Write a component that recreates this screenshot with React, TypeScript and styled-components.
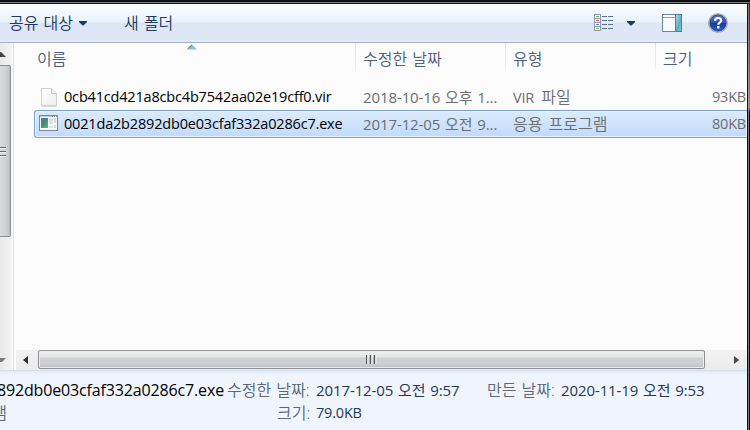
import React from "react";
import styled, { createGlobalStyle } from "styled-components";

const GlobalStyle = createGlobalStyle`
  * { box-sizing: border-box; }
  body { margin: 0; background: #0b0d10; overflow: hidden; }
`;

const Frame = styled.div`
  width: 750px;
  height: 430px;
  display: flex;
  flex-direction: column;
  overflow: hidden;
  font: 300 15px/20px "Open Sans", "Noto Sans CJK KR", sans-serif;
  color: #1e395b;
  white-space: pre;
`;

const TopEdge = styled.div`
  height: 4px;
  flex: none;
  background: linear-gradient(#0b1015 0 2px, #7b7d80 2px 3px, #15191d 3px 4px);
`;

const Middle = styled.div`
  height: 426px;
  display: flex;
`;

const Client = styled.div`
  width: 747px;
  display: flex;
  flex-direction: column;
`;

const RightEdge = styled.div`
  width: 3px;
  display: grid;
  grid-template-columns: 1px 1px 1px;
`;

const EdgeLine = styled.div<{ $fill: string }>`
  background: ${(p) => p.$fill};
`;

const Toolbar = styled.div`
  height: 39px;
  flex: none;
  display: flex;
  align-items: center;
  padding: 0 19px 0 9px;
  border-bottom: 1px solid #a0afc7;
  background: linear-gradient(#fcfeff 0, #e8f2fb 18px, #dde7f4 19px, #dce6f4 36px, #e8effa 37px);
`;

const Label = styled.span<{ $color?: string; $gap?: number }>`
  font-size: 16px;
  font-weight: 350;
  word-spacing: ${(p) => p.$gap ?? 1}px;
  color: ${(p) => p.$color ?? "inherit"};
`;

const Value = styled.span<{ $compact?: boolean }>`
  font-size: ${(p) => (p.$compact ? 14.5 : 15)}px;
  font-weight: 400;
  letter-spacing: ${(p) => (p.$compact ? -0.2 : -0.1)}px;
  word-spacing: 1px;
`;

const FileName = styled.span<{ $size?: number; $track?: number }>`
  font-size: ${(p) => p.$size ?? 14.5}px;
  font-weight: 400;
  letter-spacing: ${(p) => p.$track ?? -0.18}px;
  color: #000;
`;

const ToolbarButton = styled.div<{ $width: number }>`
  width: ${(p) => p.$width}px;
  flex: none;
  display: flex;
  align-items: center;
  gap: 6px;
`;

const ToolbarIcons = styled.div`
  margin-left: auto;
  display: flex;
  align-items: center;
`;

const Space = styled.span<{ $w: number }>`
  width: ${(p) => p.$w}px;
  flex: none;
`;

const Body = styled.div`
  height: 327px;
  flex: none;
  display: flex;
`;

const NavScroll = styled.div`
  width: 12px;
  flex: none;
  display: flex;
  flex-direction: column;
  background: linear-gradient(90deg, #e9e9e9, #f3f3f3);
`;

const NavArrow = styled.div<{ $top: number; $height: number }>`
  height: ${(p) => p.$height}px;
  padding-top: ${(p) => p.$top}px;
  flex: none;
  line-height: 0;
`;

const NavThumb = styled.div`
  height: 172px;
  flex: none;
  width: 11px;
  border: 1px solid #8d8d90;
  border-left: 0;
  border-radius: 0 2px 2px 0;
  background: linear-gradient(90deg, #dadadc, #cecfd1 70%, #b9babd);
  display: flex;
  align-items: center;
`;

const NavSplit = styled.div`
  width: 2px;
  flex: none;
  background: linear-gradient(90deg, #f8fafc 50%, #d5e2f0 50%);
`;

const List = styled.div`
  flex: 1;
  background: #fcfcfc;
  display: flex;
  flex-direction: column;
`;

const HeaderRow = styled.div`
  height: 40px;
  flex: none;
  display: grid;
  grid-template-columns: 342px 150px 150px 1fr;
  color: #4c607a;
`;

const HeaderCell = styled.div<{ $indent: number; $last?: boolean }>`
  position: relative;
  height: 29px;
  padding: 6px 0 0 ${(p) => p.$indent}px;
  border-right: ${(p) => (p.$last ? 0 : 1)}px solid;
  border-image: linear-gradient(#dbe6f2, #e5edf5 70%, #fcfcfc) 1;
`;

const SortMark = styled.svg`
  position: absolute;
  left: 173px;
  top: 1px;
`;

const FileRow = styled.div<{ $selected?: boolean }>`
  height: 28px;
  flex: none;
  margin-left: 20px;
  padding-right: 1px;
  display: grid;
  grid-template-columns: 29px 299px 150px 140px 1fr;
  align-items: center;
  line-height: 20px;
  color: #6d6d6d;
  border: 1px solid ${(p) => (p.$selected ? "#7da2ce" : "transparent")};
  border-right: 0;
  border-radius: 3px 0 0 3px;
  background: ${(p) => (p.$selected ? "linear-gradient(#dcebfc, #c1dbfc)" : "none")};
  box-shadow: ${(p) => (p.$selected ? "inset 0 0 0 1px #e8f2fd" : "none")};
  & + & { margin-top: -1px; }
`;

const FileIcon = styled.div<{ $left: number; $lift: number }>`
  padding: 0 0 ${(p) => p.$lift}px ${(p) => p.$left}px;
  line-height: 0;
`;

const SizeCell = styled.div`
  display: flex;
  justify-content: flex-end;
`;

const ScrollRow = styled.div`
  height: 20px;
  flex: none;
  margin: auto 0 0 2px;
  padding-bottom: 1px;
  display: flex;
  align-items: center;
  background: linear-gradient(#f2f2f2, #ebebeb);
`;

const HThumb = styled.div`
  width: 667px;
  height: 19px;
  border: 1px solid #8f8f91;
  border-radius: 2px;
  box-shadow: inset 0 0 0 1px #ececec;
  background: linear-gradient(#efefef 0, #e5e5e6 6px, #d1d2d4 7px, #cecfd1 13px, #bcbdc0);
  display: flex;
  align-items: center;
  justify-content: center;
`;

const ScrollArrow = styled.div<{ $width: number; $left: number }>`
  width: ${(p) => p.$width}px;
  padding-left: ${(p) => p.$left}px;
  line-height: 0;
`;

const Details = styled.div`
  flex: 1;
  background: linear-gradient(#c9d9eb 0, #dee8f5 1px, #e9f0fa 3px, #f0f4fc 6px);
  padding-top: 8px;
`;

const DetailRow = styled.div`
  height: 23px;
  display: flex;
  align-items: center;
`;

const DetailCell = styled.div<{ $width: number; $end?: boolean }>`
  width: ${(p) => p.$width}px;
  flex: none;
  display: flex;
  justify-content: ${(p) => (p.$end ? "flex-end" : "flex-start")};
`;

const DropArrow = () => (
  <svg width="8" height="5" viewBox="0 0 8 5">
    <path d="M0 0H8V1L4.5 4.5H3.5L0 1Z" fill="#1e395b" />
  </svg>
);

const ViewIcon = () => (
  <svg width="20" height="18" viewBox="0 0 20 18">
    {["#62a562", "#e0442f", "#4585d0", "#a8bd28"].map((c, i) => (
      <g key={c}>
        <rect x="0.5" y={0.5 + i * 4} width="6" height="4" fill="#fff" stroke="#8799b2" />
        <rect x="2" y={2 + i * 4} width="3" height="1" fill={c} />
        <path d={`M8 ${2.5 + i * 4}h5M14 ${2.5 + i * 4}h5`} stroke="#5d708c" />
      </g>
    ))}
  </svg>
);

const PaneIcon = () => (
  <svg width="20" height="18" viewBox="0 0 20 18">
    <defs>
      <linearGradient id="pane" x1="0" y1="0" x2="1" y2="1">
        <stop offset="0" stopColor="#b5dce8" />
        <stop offset="0.6" stopColor="#60aac6" />
        <stop offset="1" stopColor="#80d3df" />
      </linearGradient>
    </defs>
    <rect x="0.5" y="0.5" width="19" height="17" fill="#fafafa" stroke="#7188a5" />
    <path d="M1 3.5H13" stroke="#879bb6" />
    <rect x="13.5" y="0.5" width="6" height="17" fill="url(#pane)" stroke="#477f9e" />
  </svg>
);

const HelpIcon = () => (
  <svg width="20" height="20" viewBox="0 0 20 20">
    <defs>
      <linearGradient id="help" x1="0" y1="0" x2="0" y2="1">
        <stop offset="0" stopColor="#5270bd" />
        <stop offset="0.48" stopColor="#3154b1" />
        <stop offset="0.52" stopColor="#1a3a98" />
        <stop offset="1" stopColor="#2a60d0" />
      </linearGradient>
    </defs>
    <circle cx="10" cy="10" r="9.8" fill="#8c929f" />
    <circle cx="10" cy="10" r="9.2" fill="#c4c9d1" />
    <circle cx="10" cy="10" r="8.2" fill="url(#help)" stroke="#23387c" strokeWidth="0.7" />
    <path d="M7 7.8C7 5.9 8.2 5 10 5s3.1.9 3.1 2.5c0 2.1-2.8 2.1-2.8 4.2" fill="none" stroke="#fff" strokeWidth="2.2" />
    <rect x="9.1" y="13" width="2.4" height="2.4" fill="#fff" />
  </svg>
);

const PageIcon = () => (
  <svg width="16" height="19" viewBox="0 0 16 19">
    <defs>
      <linearGradient id="page" x1="0" y1="0" x2="1" y2="1">
        <stop offset="0" stopColor="#fff" />
        <stop offset="1" stopColor="#ededed" />
      </linearGradient>
    </defs>
    <path d="M.5.5H10.5L15.5 5.5V17.5H.5Z" fill="url(#page)" stroke="#d0d0d0" />
    <path d="M10.5.5V5.5H15.5" fill="#f8f8f8" stroke="#c4c4c4" />
    <path d="M1 18.5H15.5" stroke="#b2b2b2" opacity="0.4" />
  </svg>
);

const ExeIcon = () => (
  <svg width="19" height="16" viewBox="0 0 19 16">
    <defs>
      <linearGradient id="exe" x1="0" y1="0" x2="1" y2="1">
        <stop offset="0" stopColor="#4c75b5" />
        <stop offset="0.5" stopColor="#3e907a" />
        <stop offset="1" stopColor="#75b574" />
      </linearGradient>
    </defs>
    <rect x="0.5" y="0.5" width="18" height="15" fill="#f7f8f8" stroke="#81898e" />
    <path d="M1 1.5H13" stroke="#c1c9cf" />
    <path d="M13 1.5H18" stroke="#8b989f" strokeDasharray="1 1" />
    <rect x="2" y="3" width="7" height="10" fill="url(#exe)" />
    <path d="M10 3H14V9H10ZM10 11H14V13H10Z" fill="#dde0e2" />
    <path d="M16 3V8M16 10V13" stroke="#c8d0d3" strokeWidth="1.5" />
  </svg>
);

const App = () => (
  <Frame>
    <GlobalStyle />
    <TopEdge />
    <Middle>
      <Client>
        <Toolbar>
          <ToolbarButton $width={115}>
            <Label>공유 대상</Label>
            <DropArrow />
          </ToolbarButton>
          <Label>새 폴더</Label>
          <ToolbarIcons>
            <ViewIcon />
            <Space $w={13} />
            <DropArrow />
            <Space $w={27} />
            <PaneIcon />
            <Space $w={26} />
            <HelpIcon />
          </ToolbarIcons>
        </Toolbar>
        <Body>
          <NavScroll>
            <NavArrow $top={8} $height={22}>
              <svg width="6" height="5"><path d="M0 0L1 0L6 5H0Z" fill="#444" /></svg>
            </NavArrow>
            <NavThumb>
              <svg width="6" height="11">
                <path d="M0 1.5H6M0 5.5H6M0 9.5H6" stroke="#666" />
                <path d="M0 2.5H6M0 6.5H6M0 10.5H6" stroke="#f5f5f5" />
              </svg>
            </NavThumb>
            <NavArrow $top={120} $height={133}>
              <svg width="6" height="5"><path d="M0 0H6L2 4H0Z" fill="#777" /></svg>
            </NavArrow>
          </NavScroll>
          <NavSplit />
          <List>
            <HeaderRow>
              <HeaderCell $indent={23}>
                <Label>이름</Label>
                <SortMark width="10" height="6" viewBox="0 0 10 6">
                  <path d="M0 5.5L5 .5L10 5.5Z" fill="#83bfdd" />
                  <path d="M.5 5L5 .8" stroke="#426d85" />
                </SortMark>
              </HeaderCell>
              <HeaderCell $indent={7}><Label>수정한 날짜</Label></HeaderCell>
              <HeaderCell $indent={7}><Label>유형</Label></HeaderCell>
              <HeaderCell $indent={7} $last><Label>크기</Label></HeaderCell>
            </HeaderRow>
            <FileRow>
              <FileIcon $left={6} $lift={0}><PageIcon /></FileIcon>
              <FileName>0cb41cd421a8cbc4b7542aa02e19cff0.vir</FileName>
              <Value>2018-10-16 오후 1...</Value>
              <Label $gap={3}><Value $compact>VIR</Value> 파일</Label>
              <SizeCell><Value $compact>93KB</Value></SizeCell>
            </FileRow>
            <FileRow $selected>
              <FileIcon $left={4} $lift={2}><ExeIcon /></FileIcon>
              <FileName>0021da2b2892db0e03cfaf332a0286c7.exe</FileName>
              <Value>2017-12-05 오전 9...</Value>
              <Label $gap={2}>응용 프로그램</Label>
              <SizeCell><Value $compact>80KB</Value></SizeCell>
            </FileRow>
            <ScrollRow>
              <ScrollArrow $width={22} $left={7}>
                <svg width="5" height="8"><path d="M5 0V8L0 4Z" fill="#303030" /></svg>
              </ScrollArrow>
              <HThumb>
                <svg width="12" height="9">
                  <path d="M0.5 0V9M4.5 0V9M8.5 0V9" stroke="#555" strokeWidth="1.4" />
                  <path d="M1.9 0V9M5.9 0V9M9.9 0V9" stroke="#f5f5f5" />
                </svg>
              </HThumb>
              <ScrollArrow $width={40} $left={29}>
                <svg width="5" height="8"><path d="M0 0V8L5 4Z" fill="#444" /></svg>
              </ScrollArrow>
            </ScrollRow>
          </List>
        </Body>
        <Details>
          <DetailRow>
            <DetailCell $width={224} $end>
              <FileName $size={16} $track={-0.15}>892db0e03cfaf332a0286c7.exe</FileName>
            </DetailCell>
            <Space $w={3} />
            <DetailCell $width={89}><Label $color="#5a6779">수정한 날짜:</Label></DetailCell>
            <DetailCell $width={171}><Value>2017-12-05 오전 9:57</Value></DetailCell>
            <DetailCell $width={74}><Label $color="#5a6779">만든 날짜:</Label></DetailCell>
            <Value>2020-11-19 오전 9:53</Value>
          </DetailRow>
          <DetailRow>
            <DetailCell $width={7} $end><Label $color="#5a6779">램</Label></DetailCell>
            <Space $w={270} />
            <DetailCell $width={39}><Label $color="#5a6779">크기:</Label></DetailCell>
            <Value $compact>79.0KB</Value>
          </DetailRow>
        </Details>
      </Client>
      <RightEdge>
        <EdgeLine $fill="#101215" />
        <EdgeLine $fill="linear-gradient(#77787a, #a2a3a5 104px, #717880 108px)" />
        <EdgeLine $fill="linear-gradient(#303235, #858585 104px, #0c0f13 108px)" />
      </RightEdge>
    </Middle>
  </Frame>
);

export default App;
